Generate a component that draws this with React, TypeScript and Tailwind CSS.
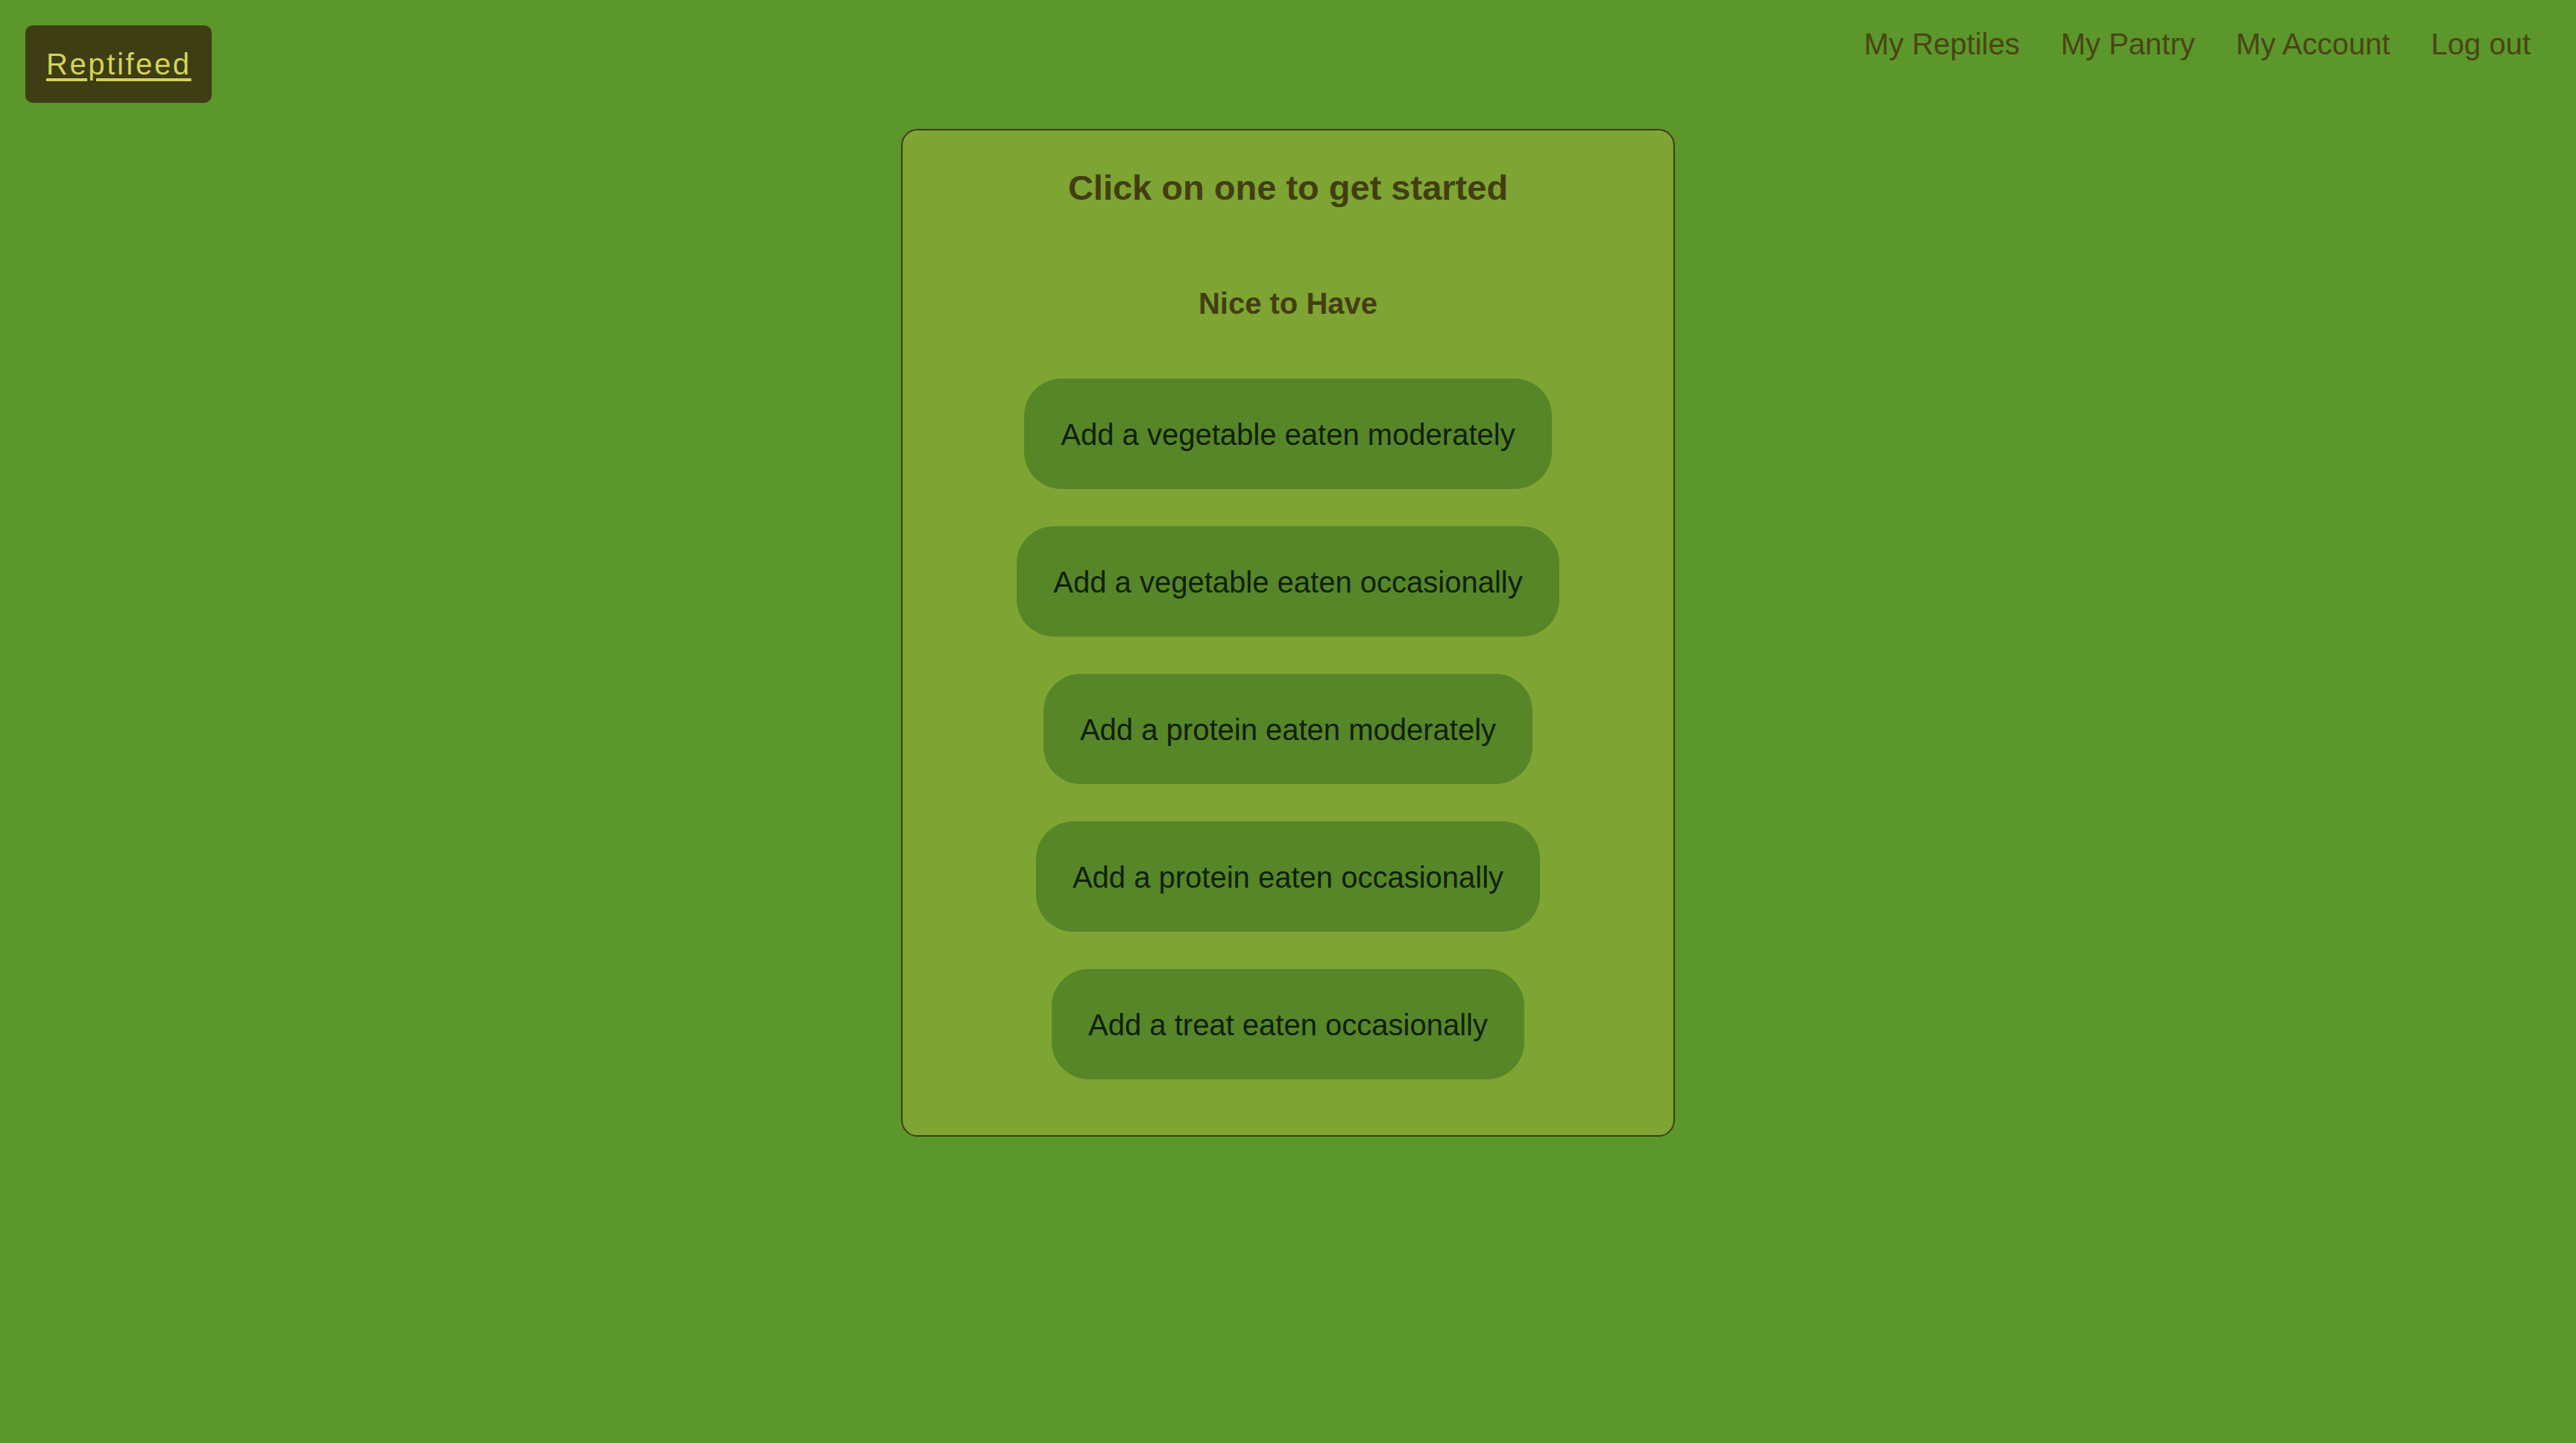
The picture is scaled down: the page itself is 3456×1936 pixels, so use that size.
import React from "react";

const buttons = [
  "Add a vegetable eaten moderately",
  "Add a vegetable eaten occasionally",
  "Add a protein eaten moderately",
  "Add a protein eaten occasionally",
  "Add a treat eaten occasionally",
];

export default function App() {
  return (
    <div
      className="min-h-screen w-full bg-[#5b972b]"
      style={{ fontFamily: '"Liberation Sans", Arial, sans-serif' }}
    >
      <header className="flex items-start justify-between pl-[34px] pr-[61px] pt-[34px]">
        <a
          href="#"
          className="flex h-[104px] w-[250px] items-center rounded-[10px] bg-[#3e3d13] pl-[28px] text-[40px] leading-none tracking-[2.6px] text-[#d3d35a] underline decoration-[4px] underline-offset-[5px]"
        >
          Reptifeed
        </a>
        <nav className="mt-[2px] flex gap-[55px] text-[40px] leading-[46px] text-[#4a4514]">
          <a href="#">My Reptiles</a>
          <a href="#">My Pantry</a>
          <a href="#">My Account</a>
          <a href="#">Log out</a>
        </nav>
      </header>

      <main className="mt-[35px] flex justify-center">
        <div className="flex w-[1038px] flex-col items-center rounded-[22px] border-2 border-[#413c10] bg-[#7ea433] pb-[75px] pt-[50px]">
          <h1 className="text-[47px] font-bold leading-[53px] text-[#433e12]">
            Click on one to get started
          </h1>
          <h2 className="mt-[106px] text-[40px] font-bold leading-[46px] text-[#433e12]">
            Nice to Have
          </h2>
          <div className="mt-[78px] flex flex-col items-center gap-[50px]">
            {buttons.map((b) => (
              <button
                key={b}
                className="h-[148px] rounded-[50px] bg-[#568628] px-[49px] pt-[2px] text-[40px] leading-[46px] text-[#10200a]"
              >
                {b}
              </button>
            ))}
          </div>
        </div>
      </main>
    </div>
  );
}
